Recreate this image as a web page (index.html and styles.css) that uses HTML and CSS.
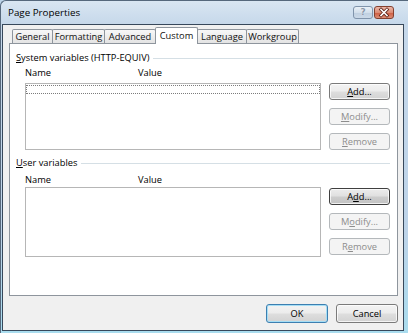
FILE: index.html
```html
<!DOCTYPE html>
<html>
<head>
<meta charset="utf-8">
<title>Page Properties</title>
<link rel="stylesheet" href="styles.css">
</head>
<body>
<div class="window">
  <div class="titlebar">
    <span class="title">Page Properties</span>
    <div class="caption-btns">
      <div class="cbtn help"><span class="help-q">?</span></div>
      <div class="cbtn close">
        <svg width="18" height="11" viewBox="0 0 18 11">
          <path d="M6 2.5 L12 8.5 M12 2.5 L6 8.5" stroke="#5e2318" stroke-width="3.2" stroke-linecap="square" fill="none"/>
          <path d="M6 2.5 L12 8.5 M12 2.5 L6 8.5" stroke="#ffffff" stroke-width="1.6" stroke-linecap="square" fill="none"/>
        </svg>
      </div>
    </div>
  </div>
  <div class="client">
    <div class="tabs">
      <div class="tab t-general">General</div>
      <div class="tab t-formatting">Formatting</div>
      <div class="tab t-advanced">Advanced</div>
      <div class="tab t-custom sel">Custom</div>
      <div class="tab t-language">Language</div>
      <div class="tab t-workgroup">Workgroup</div>
    </div>
    <div class="panel">
      <section class="group g1">
        <div class="group-head"><span><u>S</u>ystem variables (HTTP-EQUIV)</span><i class="rule"></i></div>
        <div class="cols-head"><span class="col-name">Name</span><span>Value</span></div>
        <div class="list-row">
          <div class="listbox lb1"><div class="focus-row"></div></div>
          <div class="btn-col">
            <button class="btn"><u>A</u>dd...</button>
            <button class="btn" disabled><u>M</u>odify...</button>
            <button class="btn" disabled><u>R</u>emove</button>
          </div>
        </div>
      </section>
      <section class="group g2">
        <div class="group-head"><span><u>U</u>ser variables</span><i class="rule"></i></div>
        <div class="cols-head"><span class="col-name">Name</span><span>Value</span></div>
        <div class="list-row">
          <div class="listbox lb2"></div>
          <div class="btn-col">
            <button class="btn default">A<u>d</u>d...</button>
            <button class="btn" disabled>M<u>o</u>dify...</button>
            <button class="btn" disabled>R<u>e</u>move</button>
          </div>
        </div>
      </section>
    </div>
    <div class="footer">
      <button class="btn big ok">OK</button>
      <button class="btn big">Cancel</button>
    </div>
  </div>
</div>
</body>
</html>
```
FILE: styles.css
```css
* { box-sizing: border-box; margin: 0; padding: 0; }
html, body { width: 408px; height: 333px; overflow: hidden; background: #bcd3e8; }
body {
  font-family: "Open Sans", "Noto Sans", sans-serif;
  font-size: 9.3px;
  color: #000;
}
u { text-decoration: underline; text-underline-offset: 1px; }

.window {
  width: 408px;
  height: 333px;
  display: flex;
  flex-direction: column;
  border-top: 1px solid #56687c;
  border-left: 1px solid #56687c;
  border-radius: 6px 0 0 0;
  padding: 0 4px 2px 1px;
  background: linear-gradient(to bottom, #d9e6f2 0, #c6d8ea 23px, #bdd3e8 70%, #a9dcee 100%);
}

.titlebar {
  height: 23px;
  flex: none;
  display: flex;
  align-items: flex-start;
  justify-content: space-between;
  padding: 0 10px 0 6px;
}
.title { line-height: 23px; font-size: 9.8px; color: #000; }
.caption-btns { display: flex; gap: 1px; margin-top: 5px; }
.cbtn {
  width: 20px;
  height: 13px;
  border-radius: 3px;
  display: flex;
  align-items: center;
  justify-content: center;
}
.help {
  border: 1px solid #8094ab;
  background: linear-gradient(#e9f0f7, #d3dfeb 50%, #bfcfe0 51%, #cbd9e8);
}
.help-q {
  font-family: "DejaVu Sans", sans-serif;
  font-weight: bold;
  font-size: 9px;
  line-height: 11px;
  color: #8a98aa;
  text-shadow: 0 0 1px #fff;
}
.close {
  border: 1px solid #84402f;
  background: linear-gradient(#eab7a9, #dc8b74 50%, #cd5a40 51%, #dc8e76);
}

.client {
  flex: 1;
  border: 1px solid #37485b;
  background: #f0f0f0;
  padding: 2px 5px 0 6px;
  display: flex;
  flex-direction: column;
}

.tabs {
  display: flex;
  align-items: flex-end;
  height: 16px;
  flex: none;
  padding-left: 3px;
  position: relative;
  z-index: 1;
}
.tab {
  height: 14px;
  border: 1px solid #8e959d;
  border-bottom: none;
  margin-left: -1px;
  background: linear-gradient(#f7f7f7, #e4e4e4);
  display: flex;
  align-items: center;
  justify-content: center;
  line-height: 13px;
  border-radius: 2px 2px 0 0;
  color: #111;
  white-space: nowrap;
}
.tab:first-child { margin-left: 0; }
.tab.sel {
  height: 17px;
  margin-bottom: -1px;
  background: #fff;
  padding-bottom: 2px;
}
.t-general { width: 41px; }
.t-formatting { width: 53px; }
.t-advanced { width: 52px; }
.t-custom { width: 43px; }
.t-language { width: 50px; }
.t-workgroup { width: 53px; }

.panel {
  height: 253px;
  flex: none;
  border: 1px solid #8e959d;
  background: #fff;
  padding: 7px 7px 0 6px;
}

.group-head {
  display: flex;
  align-items: center;
  height: 14px;
  line-height: 14px;
  white-space: nowrap;
}
.group-head .rule {
  flex: 1;
  height: 1px;
  background: #d5dfe5;
  margin-left: 4px;
}
.cols-head {
  display: flex;
  height: 14px;
  line-height: 14px;
  margin: 1px 0 0 9px;
}
.col-name { width: 113px; }

.list-row {
  display: flex;
  gap: 8px;
  margin: 3px 0 0 9px;
}
.listbox {
  width: 296px;
  border: 1px solid #b6b6b6;
  background: #fff;
}
.lb1 { height: 67px; }
.lb2 { height: 70px; }
.focus-row {
  height: 9px;
  margin-top: 1px;
  border: 1px dotted #7c7c7c;
}

.g2 { margin-top: 6px; }
.g2 .cols-head { margin-top: 3px; }
.g2 .list-row { margin-top: 0; }
.g2 .btn-col { padding-top: 1px; }

.btn-col {
  display: flex;
  flex-direction: column;
  gap: 8px;
  width: 61px;
}
.btn {
  font: inherit;
  height: 17px;
  width: 61px;
  display: flex;
  align-items: center;
  justify-content: center;
  line-height: 13px;
  color: #000;
  border: 1px solid #7a7a7a;
  border-radius: 3px;
  background: linear-gradient(#f3f3f3 0%, #ececec 48%, #dedede 52%, #d2d2d2 100%);
  box-shadow: inset 0 0 0 1px rgba(255, 255, 255, 0.75);
}
.btn:disabled {
  border-color: #b4b8bb;
  background: #f4f4f4;
  color: #8d8d8d;
  box-shadow: none;
}
.btn.default {
  border-color: #3f3f3f;
  background: linear-gradient(#ececec 0%, #e0e0e0 48%, #cdcdcd 52%, #c2c2c2 100%);
}

.footer {
  display: flex;
  justify-content: flex-end;
  gap: 8px;
  margin-top: 8px;
}
.btn.big { width: 62px; height: 19px; }
.btn.ok {
  border-color: #3c7fb1;
  box-shadow: inset 0 0 0 1px #a6def5;
}
```
